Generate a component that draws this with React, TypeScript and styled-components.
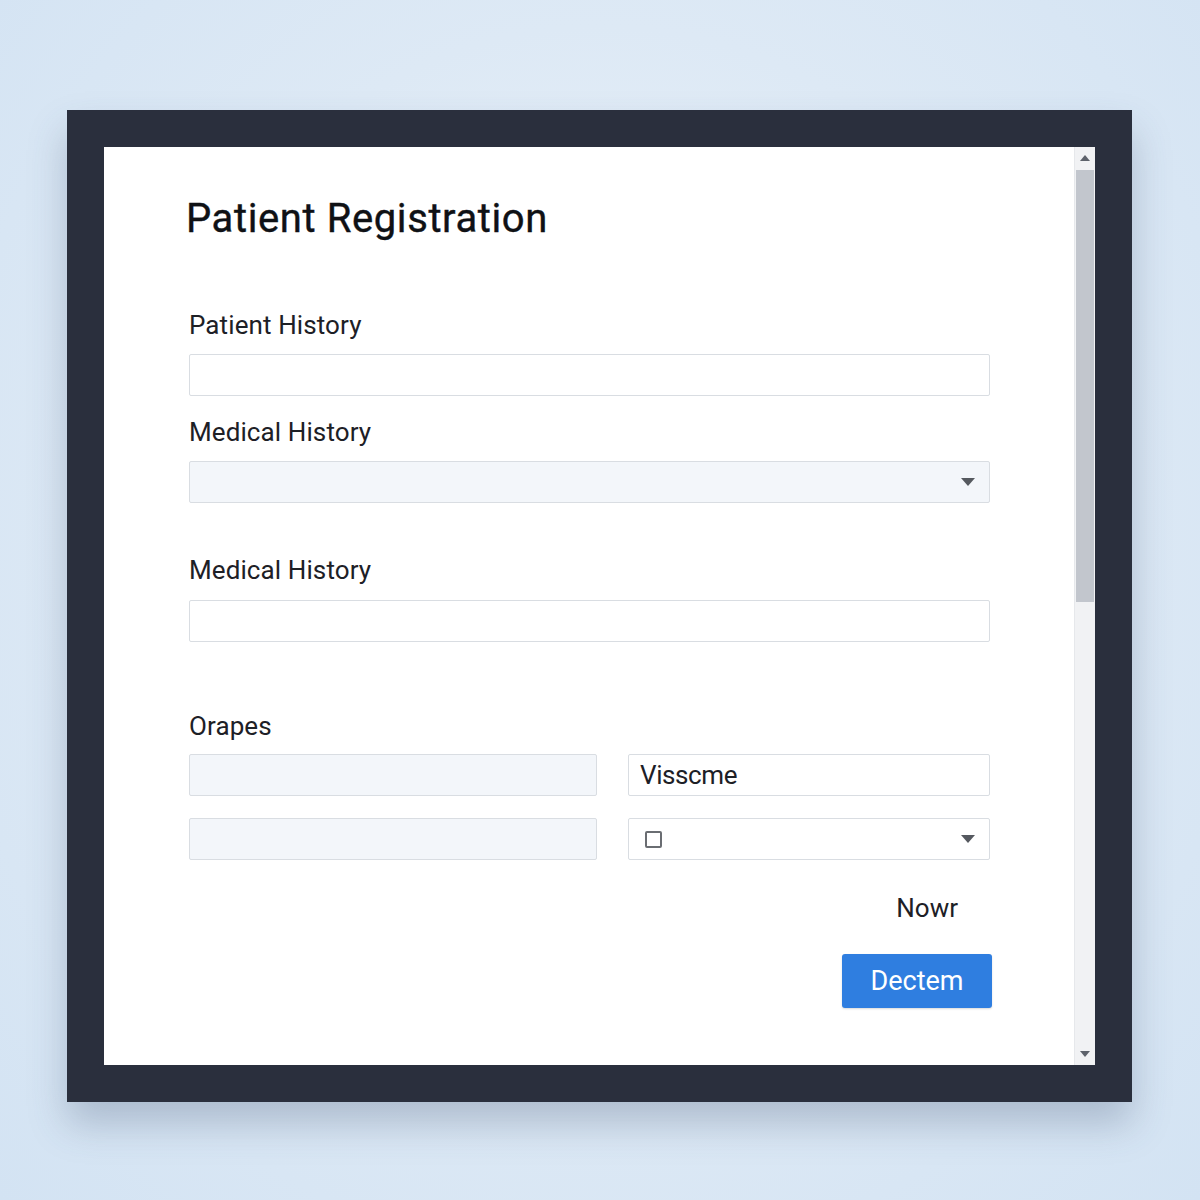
import styled, { createGlobalStyle } from "styled-components";

const GlobalStyle = createGlobalStyle`
  html, body {
    margin: 0;
    padding: 0;
  }
  body {
    width: 1200px;
    height: 1200px;
    background: radial-gradient(ellipse at 50% 45%, #eef4fb 0%, #dde9f5 55%, #d3e3f3 100%);
    font-family: Roboto, "Noto Sans", sans-serif;
    overflow: hidden;
  }
`;

const Page = styled.div`
  padding: 110px 0 0 67px;
`;

const Frame = styled.div`
  width: 991px;
  height: 918px;
  border: 37px solid #2a2f3d;
  background: #ffffff;
  display: flex;
  box-shadow: 0 22px 36px rgba(60, 80, 110, 0.28);
`;

const Content = styled.div`
  flex: 1;
  padding: 48px 84px 0 85px;
  display: flex;
  flex-direction: column;
`;

const Title = styled.h1`
  margin: 0 0 0 -3px;
  font-size: 40px;
  line-height: 48px;
  font-weight: 400;
  color: #0f1115;
  letter-spacing: 0.6px;
  -webkit-text-stroke: 0.4px #0f1115;
`;

const Label = styled.div<{ $top: number }>`
  margin-top: ${({ $top }) => $top}px;
  font-size: 26px;
  line-height: 32px;
  color: #1d2026;
  letter-spacing: 0.1px;
`;

const Field = styled.div<{ $top: number; $shaded?: boolean; $width?: number }>`
  margin-top: ${({ $top }) => $top}px;
  height: 42px;
  box-sizing: border-box;
  width: ${({ $width }) => ($width ? `${$width}px` : "100%")};
  border: 1.5px solid #d9dde2;
  border-radius: 2px;
  background: ${({ $shaded }) => ($shaded ? "#f3f6fa" : "#ffffff")};
  display: flex;
  align-items: center;
  padding: 0 14px 0 11px;
  font-size: 26px;
  color: #1d2026;
  letter-spacing: -0.4px;
`;

const Caret = styled.span`
  margin-left: auto;
  width: 0;
  height: 0;
  border-left: 7px solid transparent;
  border-right: 7px solid transparent;
  border-top: 8px solid #55595f;
`;

const Check = styled.span`
  width: 17px;
  height: 17px;
  box-sizing: border-box;
  border: 2px solid #6a6d72;
  border-radius: 2px;
  margin-left: 5px;
`;

const Row = styled.div<{ $top: number }>`
  margin-top: ${({ $top }) => $top}px;
  display: flex;
  justify-content: space-between;
`;

const Note = styled.div`
  margin-top: 32px;
  align-self: flex-end;
  margin-right: 32px;
  font-size: 26px;
  line-height: 32px;
  color: #1d2026;
`;

const Button = styled.button`
  margin-top: 30px;
  margin-right: -2px;
  align-self: flex-end;
  width: 150px;
  height: 54px;
  border: none;
  border-radius: 3px;
  background: #2f7ee0;
  color: #ffffff;
  font-family: Roboto, "Noto Sans", sans-serif;
  font-size: 27px;
  box-shadow: 0 1px 2px rgba(0, 0, 0, 0.15);
`;

const ScrollTrack = styled.div`
  width: 20px;
  background: #f1f2f4;
  border-left: 1px solid #e6e8eb;
  display: flex;
  flex-direction: column;
  align-items: center;
`;

const Arrow = styled.span<{ $down?: boolean }>`
  width: 0;
  height: 0;
  margin: ${({ $down }) => ($down ? "4px 0 8px" : "8px 0 9px")};
  border-left: 5px solid transparent;
  border-right: 5px solid transparent;
  ${({ $down }) =>
    $down ? "border-top: 6px solid #5d626b;" : "border-bottom: 6px solid #5d626b;"}
`;

const Thumb = styled.div`
  width: 18px;
  height: 432px;
  background: #c2c6cd;
`;

const Spacer = styled.div`
  flex: 1;
`;

export default function App() {
  return (
    <Page>
      <GlobalStyle />
      <Frame>
        <Content>
          <Title>Patient Registration</Title>
          <Label $top={66}>Patient History</Label>
          <Field $top={13} />
          <Label $top={20}>Medical History</Label>
          <Field $top={13} $shaded>
            <Caret />
          </Field>
          <Label $top={51}>Medical History</Label>
          <Field $top={14} />
          <Label $top={68}>Orapes</Label>
          <Row $top={12}>
            <Field $top={0} $shaded $width={408} />
            <Field $top={0} $width={362}>Visscme</Field>
          </Row>
          <Row $top={22}>
            <Field $top={0} $shaded $width={408} />
            <Field $top={0} $width={362}>
              <Check />
              <Caret />
            </Field>
          </Row>
          <Note>Nowr</Note>
          <Button>Dectem</Button>
        </Content>
        <ScrollTrack>
          <Arrow />
          <Thumb />
          <Spacer />
          <Arrow $down />
        </ScrollTrack>
      </Frame>
    </Page>
  );
}
